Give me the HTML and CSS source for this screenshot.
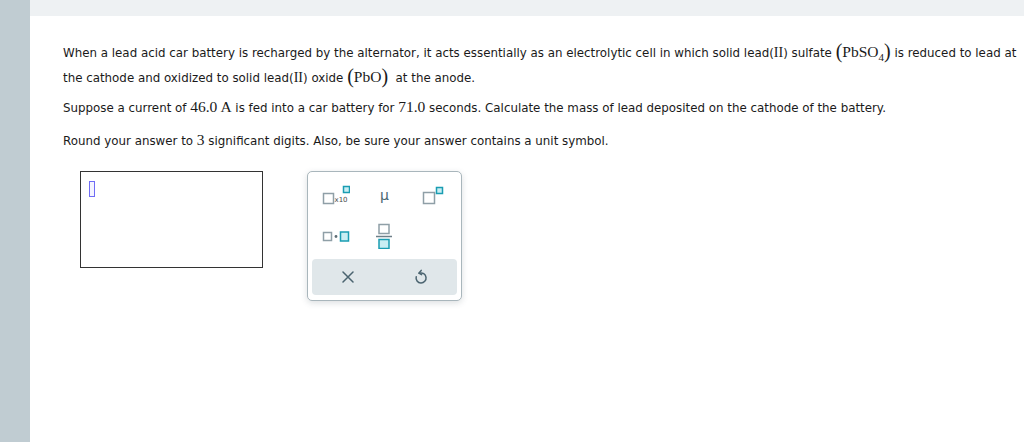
FILE: index.html
```html
<!DOCTYPE html>
<html>
<head>
<meta charset="utf-8">
<link rel="stylesheet" href="styles.css">
</head>
<body>
<div class="app">
  <div class="sidebar"></div>
  <div class="main">
    <div class="topbar"></div>
    <div class="content">
      <p class="p1">When a lead acid car battery is recharged by the alternator, it acts essentially as an electrolytic cell in which solid lead(<span class="rm">II</span>) sulfate <span class="math"><span class="paren">(</span>PbSO<sub>4</sub><span class="paren">)</span></span> is reduced to lead at the cathode and oxidized to solid lead(<span class="rm">II</span>) oxide <span class="math"><span class="paren">(</span>PbO<span class="paren">)</span></span>&nbsp; at the anode.</p>
      <p class="p2">Suppose a current of <span class="math">46.0 A</span> is fed into a car battery for <span class="math">71.0</span> seconds. Calculate the mass of lead deposited on the cathode of the battery.</p>
      <p class="p3">Round your answer to <span class="math">3</span> significant digits. Also, be sure your answer contains a unit symbol.</p>
      <div class="answer-row">
        <div class="answer-box"><span class="cursor"></span></div>
        <div class="palette">
          <div class="grid">
            <div class="cell">
              <svg width="28" height="20" viewBox="0 0 28 20">
                <rect x="1.5" y="8.5" width="10" height="10" class="g"/>
                <text x="12.5" y="16.5" class="x10">x10</text>
                <rect x="21.5" y="1.5" width="6" height="6" class="t"/>
              </svg>
            </div>
            <div class="cell"><span class="mu">μ</span></div>
            <div class="cell">
              <svg width="22" height="20" viewBox="0 0 22 20">
                <rect x="1.5" y="7.5" width="11" height="11" class="g"/>
                <rect x="14.5" y="2.5" width="6" height="6" class="t"/>
              </svg>
            </div>
            <div class="cell">
              <svg width="28" height="12" viewBox="0 0 28 12">
                <rect x="1.5" y="2.5" width="8" height="8" class="g"/>
                <circle cx="14" cy="6.5" r="1.4" class="dot"/>
                <rect x="18.5" y="2" width="8" height="9" class="t"/>
              </svg>
            </div>
            <div class="cell">
              <svg width="18" height="26" viewBox="0 0 18 26">
                <rect x="4" y="1.5" width="10" height="9" class="g"/>
                <line x1="1" y1="13.5" x2="17" y2="13.5" class="bar"/>
                <rect x="4" y="16.5" width="10" height="9" class="t"/>
              </svg>
            </div>
            <div class="cell"></div>
          </div>
          <div class="actions">
            <div class="act">
              <svg width="12" height="12" viewBox="0 0 12 12">
                <path d="M1 1 L11 11 M11 1 L1 11" class="ic"/>
              </svg>
            </div>
            <div class="act">
              <svg width="14" height="16" viewBox="0 0 14 16">
                <path d="M5.5 4.2 A5 5 0 1 1 2.2 7.8" class="ic"/>
                <path d="M7.2 1.4 L4.8 4.2 L7.6 5.6" class="ic"/>
              </svg>
            </div>
          </div>
        </div>
      </div>
    </div>
  </div>
</div>
</body>
</html>
```
FILE: styles.css
```css
html, body {
  margin: 0;
  padding: 0;
  background: #ffffff;
}
.app {
  display: flex;
  width: 1024px;
  height: 442px;
  overflow: hidden;
}
.sidebar {
  width: 30px;
  flex: none;
  background: #c0ccd2;
}
.main {
  flex: 1;
  display: flex;
  flex-direction: column;
}
.topbar {
  height: 16px;
  background: #eef1f3;
}
.content {
  padding: 25px 0 0 33px;
  font-family: "DejaVu Sans", Verdana, sans-serif;
  font-size: 11.85px;
  color: #1a1a1a;
}
p {
  margin: 0;
}
.p1 {
  line-height: 25px;
  margin-bottom: 7px;
}
.p2 {
  line-height: 20px;
  margin-bottom: 13px;
}
.p3 {
  line-height: 20px;
}
.rm {
  font-family: "Liberation Serif", "Times New Roman", serif;
  font-size: 14px;
  line-height: 1;
}
.math {
  font-family: "Liberation Serif", "Times New Roman", serif;
  font-size: 15.5px;
  line-height: 1;
}
.math sub {
  font-size: 11px;
  vertical-align: -4px;
  line-height: 1;
}
.paren {
  font-size: 20px;
  font-weight: 300;
  vertical-align: -1px;
  line-height: 1;
}
.answer-row {
  display: flex;
  align-items: flex-start;
  margin-top: 20px;
  padding-left: 17px;
  gap: 44px;
}
.answer-box {
  width: 181px;
  height: 95px;
  border: 1px solid #333333;
  position: relative;
}
.cursor {
  position: absolute;
  left: 8px;
  top: 9px;
  width: 4px;
  height: 14px;
  border: 1.5px solid #6f6cf5;
  background: #f4f4ff;
}
.palette {
  border: 1px solid #a9b6bc;
  border-radius: 5px;
  padding: 2px 4px 5px;
  width: 145px;
  box-shadow: 0 2px 6px rgba(60, 80, 90, 0.18);
  background: #fff;
}
.grid {
  display: grid;
  grid-template-columns: repeat(3, 1fr);
  grid-template-rows: 41px 41px;
}
.cell {
  display: flex;
  align-items: center;
  justify-content: center;
}
.cell svg {
  display: block;
}
.g {
  fill: #fff;
  stroke: #8f9fa7;
  stroke-width: 1.5;
}
.t {
  fill: #c9eef3;
  stroke: #1a9db2;
  stroke-width: 1.5;
}
.dot {
  fill: #5d6e76;
}
.bar {
  stroke: #6d7f88;
  stroke-width: 1.5;
}
.x10 {
  font-family: "DejaVu Sans", sans-serif;
  font-size: 7px;
  fill: #4a4a4a;
}
.mu {
  font-family: "DejaVu Sans", sans-serif;
  font-size: 14px;
  color: #4b6772;
  line-height: 1;
}
.actions {
  margin-top: 3px;
  height: 36px;
  background: #e0e7ea;
  border-radius: 4px;
  display: flex;
}
.act {
  flex: 1;
  display: flex;
  align-items: center;
  justify-content: center;
}
.act svg {
  display: block;
}
.ic {
  fill: none;
  stroke: #4b6470;
  stroke-width: 1.5;
  stroke-linecap: round;
  stroke-linejoin: round;
}
```
